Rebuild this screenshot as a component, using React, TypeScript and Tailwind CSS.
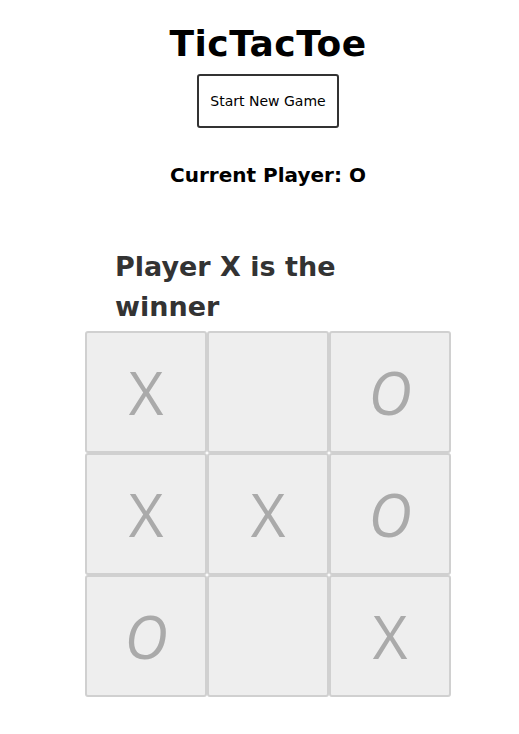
import React from "react";

const board: string[] = ["X", "", "O", "X", "X", "O", "O", "", "X"];

function Cell({ value }: { value: string }) {
  return (
    <div className="flex h-[122px] w-[122px] items-center justify-center rounded-[3px] border-2 border-[#d0d0d0] bg-[#eeeeee]">
      <span
        className={
          "text-[60px] leading-none font-normal text-[#aaaaaa] " +
          (value === "O" ? "italic" : "")
        }
        style={{ fontFamily: '"Open Sans", sans-serif' }}
      >
        {value}
      </span>
    </div>
  );
}

export default function App() {
  return (
    <div
      className="flex min-h-[734px] w-full flex-col items-center bg-white pl-[17px] pt-[20px] text-black"
      style={{ fontFamily: '"DejaVu Sans", sans-serif' }}
    >
      <h1 className="text-[36px] leading-[48px] font-bold tracking-[0.5px]">TicTacToe</h1>
      <button className="mt-[6px] h-[54px] w-[142px] rounded-[3px] border-2 border-[#333] bg-white text-[14px]">
        Start New Game
      </button>
      <p className="mt-[33px] text-[20px] leading-[28px] font-bold">Current Player: O</p>
      <div className="mt-[58px] flex w-[366px] flex-col">
        <h2 className="w-[280px] pl-[30px] text-[27px] leading-[40px] font-bold text-[#333]">
          Player X is the winner
        </h2>
        <div className="mt-[4px] grid grid-cols-3">
          {board.map((v, i) => (
            <Cell key={i} value={v} />
          ))}
        </div>
      </div>
    </div>
  );
}
